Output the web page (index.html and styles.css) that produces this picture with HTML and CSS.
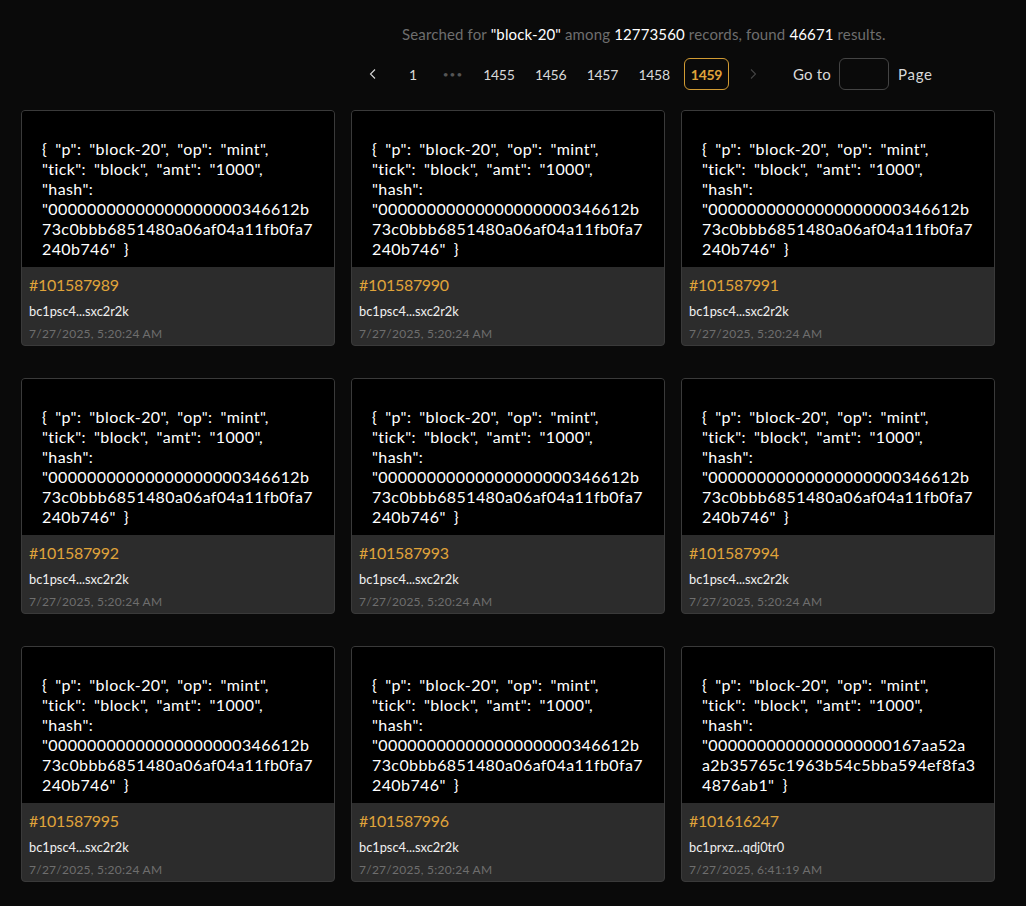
FILE: index.html
```html
<!DOCTYPE html>
<html lang="en">
<head>
<meta charset="utf-8">
<title>Search</title>
<link rel="stylesheet" href="styles.css">
</head>
<body>
<main class="page">
<p class="summary">Searched for <b>"block-20"</b> among <b>12773560</b> records, found <b>46671</b> results.</p>
<nav class="pager">
<span class="pg"><svg width="12" height="12" viewBox="0 0 12 12"><path d="M8 1.500 3.500 6 8 10.500" fill="none" stroke="currentColor" stroke-width="1.1"/></svg></span>
<span class="pg">1</span>
<span class="pg dots">•••</span>
<span class="pg wide">1455</span>
<span class="pg wide">1456</span>
<span class="pg wide">1457</span>
<span class="pg wide">1458</span>
<span class="pg current">1459</span>
<span class="pg off"><svg width="12" height="12" viewBox="0 0 12 12"><path d="M4 1.500 8.500 6 4 10.500" fill="none" stroke="currentColor" stroke-width="1.1"/></svg></span>
<span class="goto">Go to <span class="goto-box"></span> <span class="goto-page">Page</span></span>
</nav>
<section class="grid">
<article class="card"><div class="body">{ "p": "block-20", "op": "mint",<br>"tick": "block", "amt": "1000",<br>"hash":<br>"00000000000000000000346612b<br>73c0bbb6851480a06af04a11fb0fa7<br>240b746" }</div><div class="foot"><div class="num">#101587989</div><div class="addr">bc1psc4...sxc2r2k</div><div class="time">7/27/2025, 5:20:24 AM</div></div></article>
<article class="card"><div class="body">{ "p": "block-20", "op": "mint",<br>"tick": "block", "amt": "1000",<br>"hash":<br>"00000000000000000000346612b<br>73c0bbb6851480a06af04a11fb0fa7<br>240b746" }</div><div class="foot"><div class="num">#101587990</div><div class="addr">bc1psc4...sxc2r2k</div><div class="time">7/27/2025, 5:20:24 AM</div></div></article>
<article class="card"><div class="body">{ "p": "block-20", "op": "mint",<br>"tick": "block", "amt": "1000",<br>"hash":<br>"00000000000000000000346612b<br>73c0bbb6851480a06af04a11fb0fa7<br>240b746" }</div><div class="foot"><div class="num">#101587991</div><div class="addr">bc1psc4...sxc2r2k</div><div class="time">7/27/2025, 5:20:24 AM</div></div></article>
<article class="card"><div class="body">{ "p": "block-20", "op": "mint",<br>"tick": "block", "amt": "1000",<br>"hash":<br>"00000000000000000000346612b<br>73c0bbb6851480a06af04a11fb0fa7<br>240b746" }</div><div class="foot"><div class="num">#101587992</div><div class="addr">bc1psc4...sxc2r2k</div><div class="time">7/27/2025, 5:20:24 AM</div></div></article>
<article class="card"><div class="body">{ "p": "block-20", "op": "mint",<br>"tick": "block", "amt": "1000",<br>"hash":<br>"00000000000000000000346612b<br>73c0bbb6851480a06af04a11fb0fa7<br>240b746" }</div><div class="foot"><div class="num">#101587993</div><div class="addr">bc1psc4...sxc2r2k</div><div class="time">7/27/2025, 5:20:24 AM</div></div></article>
<article class="card"><div class="body">{ "p": "block-20", "op": "mint",<br>"tick": "block", "amt": "1000",<br>"hash":<br>"00000000000000000000346612b<br>73c0bbb6851480a06af04a11fb0fa7<br>240b746" }</div><div class="foot"><div class="num">#101587994</div><div class="addr">bc1psc4...sxc2r2k</div><div class="time">7/27/2025, 5:20:24 AM</div></div></article>
<article class="card"><div class="body">{ "p": "block-20", "op": "mint",<br>"tick": "block", "amt": "1000",<br>"hash":<br>"00000000000000000000346612b<br>73c0bbb6851480a06af04a11fb0fa7<br>240b746" }</div><div class="foot"><div class="num">#101587995</div><div class="addr">bc1psc4...sxc2r2k</div><div class="time">7/27/2025, 5:20:24 AM</div></div></article>
<article class="card"><div class="body">{ "p": "block-20", "op": "mint",<br>"tick": "block", "amt": "1000",<br>"hash":<br>"00000000000000000000346612b<br>73c0bbb6851480a06af04a11fb0fa7<br>240b746" }</div><div class="foot"><div class="num">#101587996</div><div class="addr">bc1psc4...sxc2r2k</div><div class="time">7/27/2025, 5:20:24 AM</div></div></article>
<article class="card"><div class="body">{ "p": "block-20", "op": "mint",<br>"tick": "block", "amt": "1000",<br>"hash":<br>"0000000000000000000167aa52a<br>a2b35765c1963b54c5bba594ef8fa3<br>4876ab1" }</div><div class="foot"><div class="num">#101616247</div><div class="addr">bc1prxz...qdj0tr0</div><div class="time">7/27/2025, 6:41:19 AM</div></div></article>
</section>
</main>
</body>
</html>
```
FILE: styles.css
```css
* { box-sizing: border-box; }
html, body { margin: 0; height: 100%; }
body {
  background: #0a0a0a;
  color: #fff;
  font-family: "Lato", "Noto Sans", sans-serif;
  overflow: hidden;
}
.page { padding: 24px 31px 0 21px; }
.summary {
  margin: 0;
  padding-left: 381px;
  font-size: 15px;
  letter-spacing: 0.14px;
  line-height: 20px;
  color: #6e6e6e;
  white-space: nowrap;
}
.summary b { font-weight: 400; color: #fff; }
.pager {
  display: flex;
  align-items: center;
  gap: 8px;
  margin-top: 14px;
  padding-left: 336px;
  height: 32px;
  font-size: 14px;
  letter-spacing: -0.3px;
  color: #d9d9d9;
}
.pg {
  display: flex;
  align-items: center;
  justify-content: center;
  flex: none;
  width: 32px;
  height: 32px;
  border: 1px solid transparent;
  border-radius: 6px;
}
.wide { width: 43.750px; }
.dots { color: #555; font-size: 10px; letter-spacing: 1px; }
.current { width: 45px; border-color: #d19b33; color: #e0a43a; font-weight: 700; }
.off { color: #444; }
.goto {
  display: flex;
  align-items: center;
  gap: 8px;
  margin-left: 16px;
  font-size: 15px;
  letter-spacing: 0.2px;
}
.goto-page { letter-spacing: 0.7px; margin-left: 1px; }
.goto-box { width: 50px; height: 32px; border: 1px solid #444; border-radius: 6px; }
.grid {
  display: grid;
  grid-template-columns: repeat(3, 314px);
  gap: 32px 16px;
  margin-top: 20px;
}
.card {
  height: 236px;
  border: 1px solid #3a3a3a;
  border-radius: 4px;
  overflow: hidden;
  background: #2c2c2c;
}
.body {
  height: 156px;
  padding: 28px 20px 8px;
  background: #000;
  font-size: 16px;
  line-height: 20px;
  letter-spacing: 0.4px;
  word-spacing: 3.500px;
  white-space: nowrap;
}
.foot { padding: 8px 7px; }
.num { font-size: 16px; letter-spacing: -0.3px; line-height: 20px; color: #e0a43a; }
.addr { font-size: 12.800px; line-height: 16px; margin-top: 8px; color: #f0f0f0; }
.time { font-size: 12px; letter-spacing: 0.25px; line-height: 16px; margin-top: 7px; color: #6e6e6e; }
```
